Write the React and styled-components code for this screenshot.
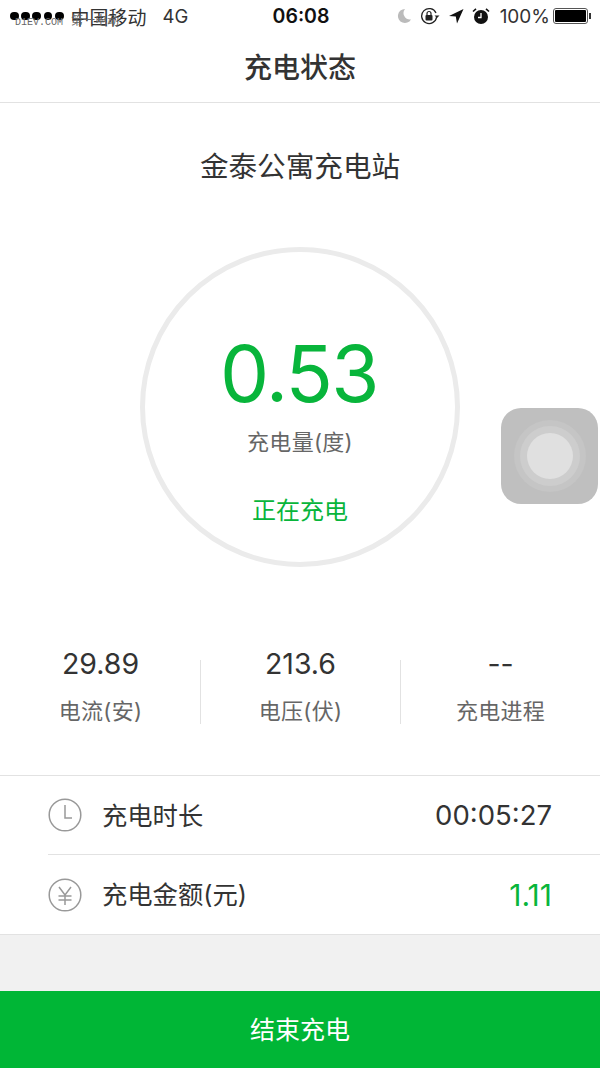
import React from "react";
import styled, { createGlobalStyle } from "styled-components";

const Global = createGlobalStyle`
  html, body { margin: 0; padding: 0; background: #fff; }
  * { box-sizing: border-box; }
`;
const GREEN = "#08b53b";

const Page = styled.div`
  width: 600px; height: 1068px; display: flex; flex-direction: column;
  background: #fff; color: #333; position: relative; overflow: hidden;
  font-family: "Inter", "Noto Sans CJK SC", sans-serif;
`;
const StatusBar = styled.div`
  height: 34px; display: flex; align-items: center; justify-content: space-between;
  padding: 0 8px 2px 10px; position: relative; color: #333;
`;
const Carrier = styled.div`display: flex; align-items: center; gap: 7px; width: 220px;`;
const Dots = styled.div`display: flex; gap: 2.4px;`;
const Dot = styled.span`width: 8.8px; height: 8.8px; border-radius: 50%; background: #000;`;
const CarrierText = styled.span`font-size: 19px;`;
const Net = styled.span`margin-left: 9px; font-size: 18.500px;`;
const Clock = styled.div`font-weight: 600; font-size: 19.500px; color: #111;`;
const StatusRight = styled.div`display: flex; align-items: center; gap: 8px; width: 220px; justify-content: flex-end;`;
const Battery = styled.span`width: 35px; height: 16px; border: 1px solid #555; border-radius: 3px; padding: 1px; display: flex; margin-right: 4px; margin-left: -5px; position: relative;`;
const BatteryFill = styled.span`flex: 1; background: #000; border-radius: 1px;`;
const BatteryCap = styled.span`position: absolute; right: -4px; top: 4px; width: 2px; height: 6px; background: #333;`;
const Percent = styled.span`font-size: 19px; color: #333; margin-left: 2px;`;
const Watermark = styled.span`
  position: absolute; left: 15px; top: 16px; font-size: 10px; line-height: 13px; color: #666; letter-spacing: 0;
  font-family: "Liberation Mono", "Noto Sans CJK SC", monospace;
`;
const WatermarkCjk = styled.span`font-size: 12px; margin-left: 2px;`;
const Header = styled.div`
  height: 69px; display: flex; align-items: center; justify-content: center;
  font-size: 28px; font-weight: 500; border-bottom: 1px solid #e2e2e2; color: #333; padding-bottom: 5px;
`;
const Station = styled.div`
  text-align: center; font-size: 28.600px; font-weight: 400; margin-top: 44px; line-height: 40px; color: #333;
`;
const Gauge = styled.div`
  width: 320px; height: 320px; border-radius: 50%; border: 5px solid #ebebeb; margin: 60px auto 0;
  display: flex; flex-direction: column; align-items: center;
`;
const Amount = styled.div`color: ${GREEN}; font-size: 78px; line-height: 90px; margin-top: 77px; font-weight: 400; letter-spacing: -1.6px; margin-right: 2px;`;
const AmountLabel = styled.div`color: #666; font-size: 22px; line-height: 30px; margin-top: 8px; letter-spacing: 0.3px;`;
const StateLabel = styled.div`color: ${GREEN}; font-size: 24px; line-height: 34px; margin-top: 37px;`;
const Metrics = styled.div`display: grid; grid-template-columns: repeat(3, 1fr); margin-top: 75px;`;
const Metric = styled.div`
  height: 64px; position: relative; display: flex; flex-direction: column; align-items: center; padding-left: 1px;
  & + &::before { content: ""; position: absolute; left: 0; top: 18px; bottom: -18px; width: 1px; background: #e2e2e2; }
`;
const MetricValue = styled.div`font-size: 28.500px; line-height: 40px; color: #333; margin-top: 2px;`;
const MetricLabel = styled.div`font-size: 22px; line-height: 32px; color: #666; margin-top: 11px; letter-spacing: 0.3px;`;
const List = styled.div`
  margin-top: 69px; border-top: 1px solid #e2e2e2; border-bottom: 1px solid #e2e2e2; padding-left: 48px;
`;
const Row = styled.div`
  height: 78px; display: flex; align-items: center; padding-right: 48px;
  & + & { border-top: 1px solid #e2e2e2; height: 80px; }
`;
const RowIcon = styled.svg`width: 34px; height: 34px; flex: none;`;
const RowLabel = styled.div`font-size: 25.300px; margin-left: 20px; padding-bottom: 3px; color: #333; flex: 1;`;
const RowValue = styled.div`font-size: ${p => p.$green ? 30 : 27.5}px; color: ${p => p.$green ? GREEN : "#333"};`;
const Filler = styled.div`flex: 1; background: #f1f1f1;`;
const Action = styled.div`
  height: 77px; background: #00b636; color: #fff; font-size: 25px; padding-bottom: 4px;
  display: flex; align-items: center; justify-content: center;
`;
const Assistive = styled.div`
  position: absolute; left: 501px; top: 408px; width: 97px; height: 96px; border-radius: 20px;
  background: #bfbfbf; display: flex; align-items: center; justify-content: center;
`;
const Ring = styled.div`
  width: ${p => p.$s}px; height: ${p => p.$s}px; border-radius: 50%; background: ${p => p.$c};
  display: flex; align-items: center; justify-content: center;
`;

export default function App() {
  return (
    <Page>
      <Global />
      <StatusBar>
        <Carrier>
          <Dots>{[0,1,2,3,4].map(i => <Dot key={i} />)}</Dots>
          <CarrierText>中国移动</CarrierText>
          <Net>4G</Net>
        </Carrier>
        <Clock>06:08</Clock>
        <StatusRight>
          <svg width="16" height="16" viewBox="0 0 16 16"><path d="M9 1a7 7 0 1 0 6 10.5A6.5 6.5 0 0 1 9 1z" fill="#bbb"/></svg>
          <svg width="20" height="18" viewBox="0 0 20 18" fill="none"><path d="M16 6a7.5 7.5 0 1 0 .6 4" stroke="#222" strokeWidth="1.3"/><path d="M14.5 8.5h5L17 11z" fill="#222"/><rect x="5.5" y="8" width="7" height="5.5" rx="1" fill="#222"/><path d="M7 8V6.5a2 2 0 0 1 4 0V8" stroke="#222" strokeWidth="1.2"/></svg>
          <svg width="16" height="16" viewBox="0 0 16 16"><path d="M15.5 1 1 8l6.8.6L9 15.5z" fill="#111"/></svg>
          <svg width="18" height="18" viewBox="0 0 18 18"><circle cx="9" cy="10" r="7" fill="#111"/><path d="M9 6v4.5H6" stroke="#fff" strokeWidth="1.3" fill="none"/><path d="M1 4.5 4 1.8M17 4.5 14 1.8" stroke="#111" strokeWidth="1.6"/></svg>
          <Percent>100%</Percent>
          <Battery><BatteryFill /><BatteryCap /></Battery>
        </StatusRight>
        <Watermark>D1EV.COM <WatermarkCjk>第一电动</WatermarkCjk></Watermark>
      </StatusBar>
      <Header>充电状态</Header>
      <Station>金泰公寓充电站</Station>
      <Gauge>
        <Amount>0.53</Amount>
        <AmountLabel>充电量(度)</AmountLabel>
        <StateLabel>正在充电</StateLabel>
      </Gauge>
      <Metrics>
        <Metric><MetricValue>29.89</MetricValue><MetricLabel>电流(安)</MetricLabel></Metric>
        <Metric><MetricValue>213.6</MetricValue><MetricLabel>电压(伏)</MetricLabel></Metric>
        <Metric><MetricValue>--</MetricValue><MetricLabel>充电进程</MetricLabel></Metric>
      </Metrics>
      <List>
        <Row>
          <RowIcon viewBox="0 0 34 34" fill="none"><circle cx="17" cy="17" r="15.8" stroke="#999" strokeWidth="1.5"/><path d="M17 7v13h7" stroke="#999" strokeWidth="1.5"/></RowIcon>
          <RowLabel>充电时长</RowLabel>
          <RowValue>00:05:27</RowValue>
        </Row>
        <Row>
          <RowIcon viewBox="0 0 34 34" fill="none"><circle cx="17" cy="17" r="15.8" stroke="#999" strokeWidth="1.5"/><path d="M11 9l6 8 6-8M10.500 18h13M10.500 22h13M17 17v10" stroke="#999" strokeWidth="1.5"/></RowIcon>
          <RowLabel>充电金额(元)</RowLabel>
          <RowValue $green>1.11</RowValue>
        </Row>
      </List>
      <Filler />
      <Action>结束充电</Action>
      <Assistive>
        <Ring $s={72} $c="#c5c5c5"><Ring $s={60} $c="#cdcdcd"><Ring $s={46} $c="#e0e0e0" /></Ring></Ring>
      </Assistive>
    </Page>
  );
}
